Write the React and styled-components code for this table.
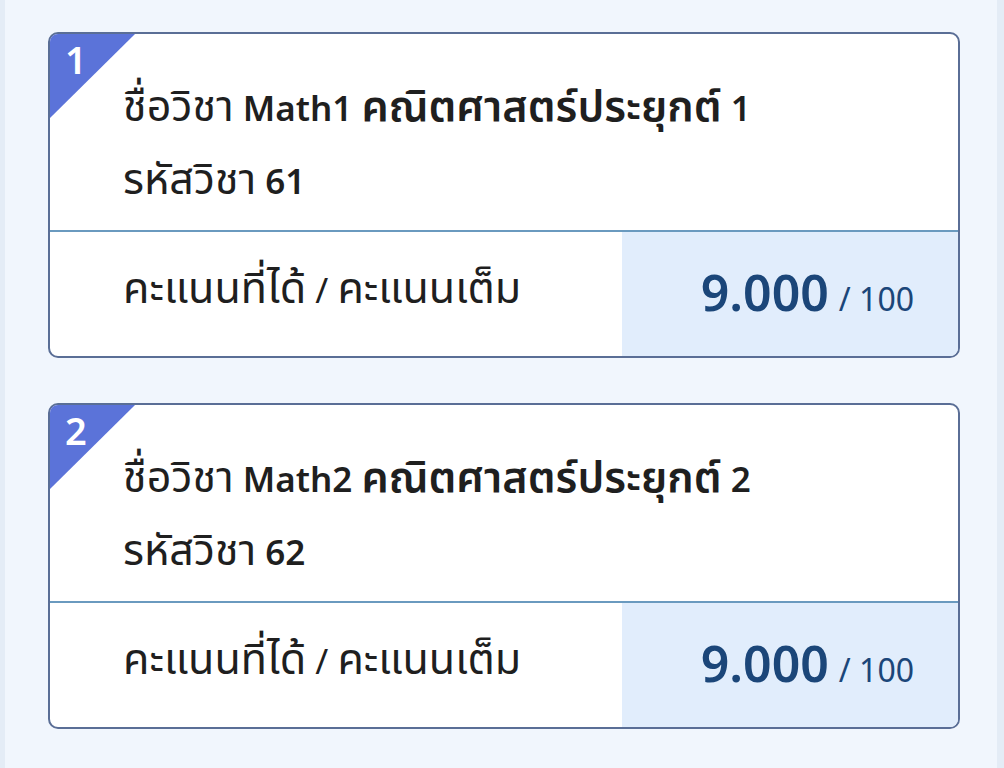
import React from "react";
import styled, { createGlobalStyle } from "styled-components";

const GlobalStyle = createGlobalStyle`
  html, body {
    margin: 0;
    padding: 0;
    background: #e4ecf6;
  }
  body {
    font-family: "Noto Sans", "Noto Sans Thai", "DejaVu Sans", sans-serif;
  }
`;

const Page = styled.div`
  margin: 0 7px 0 5px;
  min-height: 768px;
  background: #f1f6fd;
  padding: 32px 37px 20px 43px;
  box-sizing: border-box;
  display: flex;
  flex-direction: column;
  gap: 45px;
`;

const Card = styled.div`
  position: relative;
  background: #ffffff;
  border: 2px solid #5a6e96;
  border-radius: 10px;
  overflow: hidden;
  height: 326px;
  box-sizing: border-box;
  display: flex;
  flex-direction: column;
`;

const Corner = styled.div`
  position: absolute;
  top: 0;
  left: 0;
  width: 85px;
  height: 84px;
  background: #5b73d9;
  clip-path: polygon(0 0, 100% 0, 0 100%);
`;

const CornerNum = styled.span`
  position: absolute;
  top: 3px;
  left: 15px;
  color: #ffffff;
  font-size: 38px;
  font-weight: 600;
  line-height: 44px;
`;

const Info = styled.div`
  padding: 36px 0 0 73px;
  height: 198px;
  box-sizing: border-box;
  border-bottom: 2px solid #6a9abf;
`;

const Line = styled.div`
  font-size: 35px;
  line-height: 70px;
  color: #1f1f1f;
  white-space: nowrap;
`;

const Thai = styled.span`
  font-size: 43px;
`;

const Strong = styled.span`
  font-weight: 600;
`;

const Bottom = styled.div`
  flex: 1;
  display: flex;
`;

const Label = styled.div`
  flex: 1;
  padding: 30px 0 0 73px;
  font-size: 35px;
  line-height: 50px;
  color: #1f1f1f;
  white-space: nowrap;
`;

const ScoreBox = styled.div`
  width: 336px;
  background: #e1edfc;
  display: flex;
  align-items: baseline;
  justify-content: flex-end;
  padding: 32px 44px 0 0;
  box-sizing: border-box;
  color: #1b4679;
`;

const Score = styled.span`
  font-size: 50px;
  font-weight: 600;
  line-height: 56px;
`;

const Full = styled.span`
  font-size: 32px;
  margin-left: 10px;
`;

const subjects = [
  { no: 1, name: "Math1", thai: "คณิตศาสตร์ประยุกต์", num: "1", code: "61", score: "9.000", full: "100" },
  { no: 2, name: "Math2", thai: "คณิตศาสตร์ประยุกต์", num: "2", code: "62", score: "9.000", full: "100" },
];

export default function App() {
  return (
    <>
      <GlobalStyle />
      <Page>
        {subjects.map((s) => (
          <Card key={s.no}>
            <Corner />
            <CornerNum>{s.no}</CornerNum>
            <Info>
              <Line>
                <Thai>ชื่อวิชา</Thai>{" "}
                <Strong>
                  {s.name} <Thai>{s.thai}</Thai> {s.num}
                </Strong>
              </Line>
              <Line>
                <Thai>รหัสวิชา</Thai> <Strong>{s.code}</Strong>
              </Line>
            </Info>
            <Bottom>
              <Label>
                <Thai>คะแนนที่ได้</Thai> / <Thai>คะแนนเต็ม</Thai>
              </Label>
              <ScoreBox>
                <Score>{s.score}</Score>
                <Full>/ {s.full}</Full>
              </ScoreBox>
            </Bottom>
          </Card>
        ))}
      </Page>
    </>
  );
}
